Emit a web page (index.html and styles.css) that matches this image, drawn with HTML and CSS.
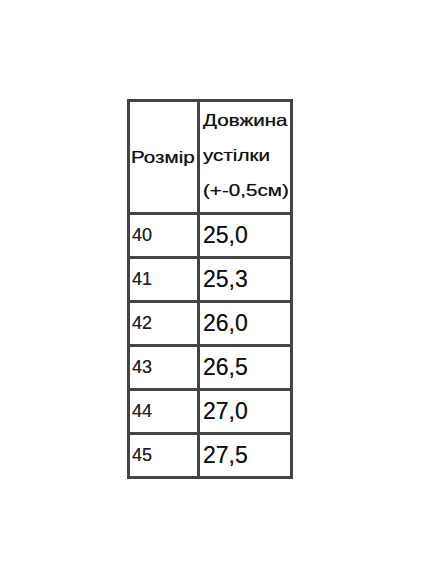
FILE: index.html
```html
<!DOCTYPE html>
<html lang="uk">
<head>
<meta charset="utf-8">
<title>Розміри</title>
<link rel="stylesheet" href="styles.css">
</head>
<body>
<table class="sizes">
  <tr class="head">
    <td class="c1"><span class="wide">Розмір</span></td>
    <td class="c2">
      <span class="wide">Довжина</span><br>
      <span class="wide">устілки</span><br>
      <span class="wide">(+-0,5см)</span>
    </td>
  </tr>
  <tr><td class="c1 sm">40</td><td class="c2 lg">25,0</td></tr>
  <tr><td class="c1 sm">41</td><td class="c2 lg">25,3</td></tr>
  <tr><td class="c1 sm">42</td><td class="c2 lg">26,0</td></tr>
  <tr><td class="c1 sm">43</td><td class="c2 lg">26,5</td></tr>
  <tr><td class="c1 sm">44</td><td class="c2 lg">27,0</td></tr>
  <tr><td class="c1 sm">45</td><td class="c2 lg">27,5</td></tr>
</table>
</body>
</html>
```
FILE: styles.css
```css
html, body {
  margin: 0;
  padding: 0;
  background: #ffffff;
}
body {
  font-family: "Liberation Sans", Arial, sans-serif;
  color: #111111;
}
.sizes {
  margin: 99px 0 0 127px;
  border-collapse: separate;
  border-spacing: 3px;
  background: #444444;
}
.sizes td {
  background: #ffffff;
  padding: 0;
  vertical-align: middle;
  text-align: left;
  height: 41px;
  text-shadow: 0 0 0.6px rgba(0, 0, 0, 0.6);
}
.sizes .c1 {
  width: 67px;
  padding-left: 2px;
  box-sizing: border-box;
}
.sizes .c2 {
  width: 90px;
  padding-left: 3px;
  box-sizing: border-box;
}
.sizes .head td {
  height: 110px;
  font-size: 16.5px;
  line-height: 35px;
}
.sizes .head .c1 {
  padding-left: 1px;
}
.sizes .head .c2 {
  padding-top: 0;
  padding-bottom: 4px;
}
.wide {
  display: inline-block;
  transform: scaleX(1.25);
  transform-origin: left center;
  white-space: nowrap;
}
.sm {
  font-size: 18px;
  color: #222222;
}
.lg {
  font-size: 23px;
  color: #111111;
}
```
